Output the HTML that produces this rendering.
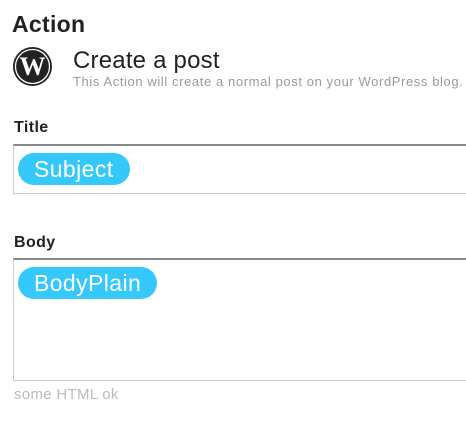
<!DOCTYPE html>
<html><head><style>
body{margin:0;width:466px;height:426px;background:#fff;font-family:"Liberation Sans",Arial,sans-serif;position:relative;overflow:hidden}
.a{position:absolute;white-space:nowrap}
.pill{position:absolute;background:#35c9fb;color:#fff;border-radius:17px;font-size:23px;line-height:32px;padding:0 16px;height:32px;letter-spacing:0.4px}
.box{position:absolute;left:13px;width:470px;border:1px solid #ccc;border-top:2px solid #888;box-sizing:border-box}
</style></head><body>
<div class="a" style="left:12px;top:11px;font-size:23px;font-weight:bold;color:#222;letter-spacing:0.3px">Action</div>
<svg class="a" style="left:12px;top:46px" width="41" height="41" viewBox="0 0 41 41">
<circle cx="20.5" cy="20.5" r="19.5" fill="#222"/>
<circle cx="20.5" cy="20.5" r="17" fill="none" stroke="#fff" stroke-width="1.3"/>
<text x="20.5" y="29" text-anchor="middle" font-family="Liberation Serif,serif" font-size="26" font-weight="bold" fill="#fff">W</text>
</svg>
<div class="a" style="left:73px;top:47px;font-size:24px;color:#222;letter-spacing:0.2px">Create a post</div>
<div class="a" style="left:73px;top:74px;font-size:13px;color:#999;letter-spacing:0.6px">This Action will create a normal post on your WordPress blog.</div>
<div class="a" style="left:14px;top:119px;font-size:16px;font-weight:bold;color:#222;letter-spacing:0.4px">Title</div>
<div class="box" style="top:144px;height:50px"></div>
<div class="pill" style="left:18px;top:153px">Subject</div>
<div class="a" style="left:14px;top:234px;font-size:16px;font-weight:bold;color:#222;letter-spacing:0.4px">Body</div>
<div class="box" style="top:258px;height:123px"></div>
<div class="pill" style="left:18px;top:267px">BodyPlain</div>
<div class="a" style="left:14px;top:386px;font-size:15px;color:#bbb;letter-spacing:0.3px">some HTML ok</div>
</body></html>
